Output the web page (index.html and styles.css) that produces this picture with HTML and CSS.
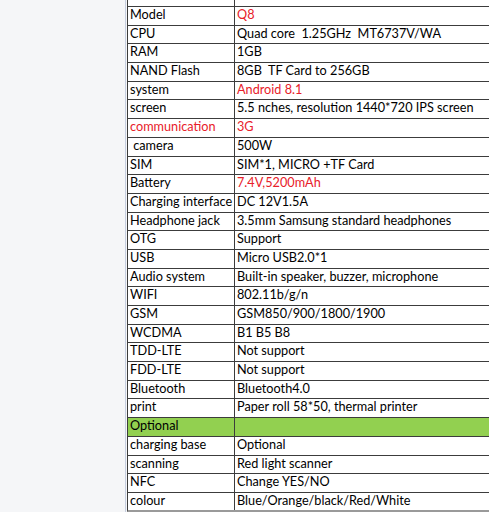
FILE: index.html
```html
<!DOCTYPE html>
<html>
<head>
<meta charset="utf-8">
<link rel="stylesheet" href="styles.css">
</head>
<body>
<div class="page">
  <div class="sheet">
    <div class="row top"><div class="c1"></div><div class="c2"></div></div>
    <div class="row"><div class="c1">Model</div><div class="c2 red">Q8</div></div>
    <div class="row"><div class="c1">CPU</div><div class="c2">Quad core&nbsp; 1.25GHz&nbsp; MT6737V/WA</div></div>
    <div class="row"><div class="c1">RAM</div><div class="c2">1GB</div></div>
    <div class="row"><div class="c1">NAND Flash</div><div class="c2">8GB&nbsp; TF Card to 256GB</div></div>
    <div class="row"><div class="c1">system</div><div class="c2 red">Android 8.1</div></div>
    <div class="row"><div class="c1">screen</div><div class="c2">5.5 nches, resolution 1440*720 IPS screen</div></div>
    <div class="row"><div class="c1 red">communication</div><div class="c2 red">3G</div></div>
    <div class="row"><div class="c1">&nbsp;camera</div><div class="c2">500W</div></div>
    <div class="row"><div class="c1">SIM</div><div class="c2">SIM*1, MICRO +TF Card</div></div>
    <div class="row"><div class="c1">Battery</div><div class="c2 red">7.4V,5200mAh</div></div>
    <div class="row"><div class="c1">Charging interface</div><div class="c2">DC 12V1.5A</div></div>
    <div class="row"><div class="c1">Headphone jack</div><div class="c2">3.5mm Samsung standard headphones</div></div>
    <div class="row"><div class="c1">OTG</div><div class="c2">Support</div></div>
    <div class="row"><div class="c1">USB</div><div class="c2">Micro USB2.0*1</div></div>
    <div class="row"><div class="c1">Audio system</div><div class="c2">Built-in speaker, buzzer, microphone</div></div>
    <div class="row"><div class="c1">WIFI</div><div class="c2">802.11b/g/n</div></div>
    <div class="row"><div class="c1">GSM</div><div class="c2">GSM850/900/1800/1900</div></div>
    <div class="row"><div class="c1">WCDMA</div><div class="c2">B1 B5 B8</div></div>
    <div class="row"><div class="c1">TDD-LTE</div><div class="c2">Not support</div></div>
    <div class="row"><div class="c1">FDD-LTE</div><div class="c2">Not support</div></div>
    <div class="row"><div class="c1">Bluetooth</div><div class="c2">Bluetooth4.0</div></div>
    <div class="row"><div class="c1">print</div><div class="c2">Paper roll 58*50, thermal printer</div></div>
    <div class="row green"><div class="c1">Optional</div><div class="c2"></div></div>
    <div class="row"><div class="c1">charging base</div><div class="c2">Optional</div></div>
    <div class="row"><div class="c1">scanning</div><div class="c2">Red light scanner</div></div>
    <div class="row"><div class="c1">NFC</div><div class="c2">Change YES/NO</div></div>
    <div class="row last"><div class="c1">colour</div><div class="c2">Blue/Orange/black/Red/White</div></div>
  </div>
</div>
</body>
</html>
```

FILE: styles.css
```css
html, body {
  margin: 0;
  padding: 0;
  background: #f5f6f8;
  height: 512px;
  overflow: hidden;
}
.page {
  padding-left: 125px;
}
.sheet {
  border-left: 1px solid #c6cedf;
  padding-left: 1px;
  background: #f5f6f8;
  width: 380px;
  font-family: Lato, "Liberation Sans", sans-serif;
  font-size: 12.7px;
  color: #000;
}
.row {
  display: grid;
  grid-template-columns: 107px 1fr;
  height: 18.7px;
  box-sizing: border-box;
  border-bottom: 1px solid #3c3c3c;
  border-left: 1px solid #3c3c3c;
  background: #fff;
}
.row.top {
  height: 7px;
}
.row.last {
  border-bottom: 2px solid #9a9a9a;
}
.c1 {
  border-right: 1px solid #3c3c3c;
  padding-left: 2px;
  line-height: 14.5px;
  white-space: nowrap;
  overflow: hidden;
}
.c2 {
  padding-left: 2px;
  line-height: 14.5px;
  white-space: nowrap;
}
.red {
  color: #e8202a;
}
.green .c1, .green .c2 {
  background: #92d050;
}
```
